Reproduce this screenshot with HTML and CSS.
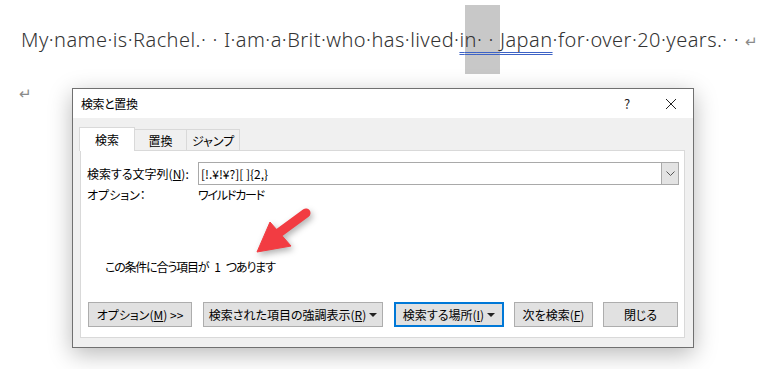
FILE: index.html
```html
<!DOCTYPE html>
<html lang="ja">
<head>
  <meta charset="UTF-8">
  <title>検索と置換</title>
  <link rel="stylesheet" href="styles.css">
</head>
<body>

  <div class="doc">
    <p class="line">My·name·is·Rachel.<span class="sp">··</span>I·am·a·Brit·who·has·lived·<span class="match">i<span class="sel">n<span class="sp">··</span></span>Japan</span>·for·over·20·years.<span class="sp">··</span><span class="mark">↵</span></p>
    <p class="mark para">↵</p>
  </div>

  <div class="dialog">
    <div class="titlebar">
      <span class="title">検索と置換</span>
      <span class="tb-btn">?</span>
      <span class="tb-btn">
        <svg width="12" height="12" viewBox="0 0 12 12"><path d="M1 1L11 11M11 1L1 11" stroke="#222" stroke-width="1" fill="none"/></svg>
      </span>
    </div>

    <div class="dlg-body">
      <div class="tabs">
        <div class="tab active">検索</div>
        <div class="tab t2">置換</div>
        <div class="tab t3">ジャンプ</div>
      </div>

      <div class="panel">
        <div class="row">
          <span class="label">検索する文字列(<u>N</u>):</span>
          <div class="combo">
            <span class="combo-text">[!.¥!¥?][ ]{2,}</span>
            <span class="combo-btn">
              <svg width="9" height="5" viewBox="0 0 9 5"><path d="M0.5 0.5L4.5 4.5L8.5 0.5" stroke="#555" stroke-width="1" fill="none"/></svg>
            </span>
          </div>
        </div>
        <div class="row opt">
          <span class="label">オプション：</span>
          <span class="kana">ワイルドカード</span>
        </div>

        <p class="result kana">この条件に合う項目が<span class="num">1</span>つあります</p>

        <div class="buttons">
          <button class="btn b1">オプション(<u>M</u>) &gt;&gt;</button>
          <button class="btn b2">検索された項目の強調表示(<u>R</u>) <span class="caret"></span></button>
          <button class="btn b3 focus">検索する場所(<u>I</u>) <span class="caret"></span></button>
          <button class="btn b4">次を検索(<u>F</u>)</button>
          <button class="btn b5">閉じる</button>
        </div>
      </div>
    </div>
  </div>

  <svg class="arrow" width="70" height="60" viewBox="250 205 70 60">
    <g fill="#f23c42" stroke="#f23c42">
      <line x1="306" y1="213" x2="276" y2="235" stroke-width="9" stroke-linecap="round"/>
      <polygon points="257,252 270,222 291,246" stroke-width="1" stroke-linejoin="round"/>
    </g>
  </svg>

</body>
</html>
```

FILE: styles.css
```css
body {
  margin: 0;
  background-color: white;
  font-family: "Noto Sans", "Noto Sans CJK JP", sans-serif;
  position: relative;
  height: 369px;
  overflow: hidden;
}

.doc {
  padding: 26px 0 0 21px;
}

.line {
  margin: 0;
  font-size: 20px;
  font-weight: 300;
  line-height: 27px;
  color: #333;
  letter-spacing: 0.45px;
  white-space: nowrap;
}

/* wide space marks (two spaces between sentences) */
.sp {
  letter-spacing: 6.6px;
}

.match {
  text-decoration-line: underline;
  text-decoration-style: double;
  text-decoration-color: #3d63c6;
  text-decoration-thickness: 1px;
  text-underline-offset: 5px;
}

.sel {
  background-color: #c8c8c8;
  padding: 21px 0 21px 0;
}

.mark {
  color: #8a8a8a;
  font-size: 15px;
  letter-spacing: 0;
}

.para {
  margin: 28px 0 0 -2px;
  line-height: 20px;
}

/* dialog */

.dialog {
  position: absolute;
  left: 72px;
  top: 88px;
  width: 622px;
  height: 260px;
  box-sizing: border-box;
  border: 1px solid #707070;
  background-color: #f0f0f0;
  box-shadow: 0 6px 22px rgba(0, 0, 0, 0.28);
  display: flex;
  flex-direction: column;
  font-family: "Noto Sans CJK JP", sans-serif;
  font-size: 12px;
  color: #000;
  font-feature-settings: "palt";
}

.titlebar {
  height: 29px;
  background-color: white;
  display: flex;
  align-items: center;
  padding-left: 8px;
}

.title {
  flex: 1;
  letter-spacing: -0.4px;
}

.tb-btn {
  width: 44px;
  height: 29px;
  display: flex;
  align-items: center;
  justify-content: center;
  font-size: 13px;
  color: #222;
}

.dlg-body {
  flex: 1;
  display: flex;
  flex-direction: column;
  padding: 9px 8px 9px 7px;
}

.tabs {
  display: flex;
  align-items: flex-end;
  height: 23px;
  margin-left: -1px;
}

.tab {
  height: 21px;
  box-sizing: border-box;
  border: 1px solid #d9d9d9;
  border-bottom: none;
  display: flex;
  align-items: center;
  justify-content: center;
  background-color: #f0f0f0;
  margin-left: -1px;
}

.tab.active {
  width: 56px;
  height: 24px;
  margin-left: 0;
  margin-bottom: -1px;
  background-color: white;
  position: relative;
  z-index: 1;
  padding-bottom: 1px;
}

.t2 { width: 53px; }
.t3 { width: 54px; }

.panel {
  flex: 1;
  background-color: white;
  border: 1px solid #d9d9d9;
  display: flex;
  flex-direction: column;
  padding: 11px 5px 10px 6px;
}

.row {
  display: flex;
  align-items: center;
  line-height: 17px;
}

.label {
  width: 111px;
}

.opt {
  margin-top: 1px;
}

.kana {
  letter-spacing: -1.2px;
}

.num {
  letter-spacing: 0;
  margin: 0 5px 0 6px;
}

.combo {
  flex: 1;
  height: 23px;
  box-sizing: border-box;
  border: 1px solid #a9a9a9;
  display: flex;
  align-items: center;
}

.combo-text {
  flex: 1;
  padding-left: 2px;
}

.combo-btn {
  width: 17px;
  height: 21px;
  box-sizing: border-box;
  background-color: #e3e3e3;
  border-left: 1px solid #a9a9a9;
  display: flex;
  align-items: center;
  justify-content: center;
}

.result {
  margin: 55px 0 0 18px;
  line-height: 17px;
}

.buttons {
  margin-top: auto;
  display: flex;
  gap: 10px;
  padding-left: 1px;
}

.btn {
  height: 25px;
  box-sizing: border-box;
  border: 1px solid #adadad;
  background-color: #e1e1e1;
  font-family: inherit;
  font-size: 12px;
  font-feature-settings: "palt";
  color: #000;
  padding: 0;
  display: flex;
  align-items: center;
  justify-content: center;
}

.btn.focus {
  border: 2px solid #0078d7;
}

.b1 { width: 104px; }
.b2 { width: 180px; margin-left: 1px; }
.b3 { width: 110px; margin-left: 1px; }
.b4 { width: 79px; }
.b5 { width: 75px; }

.caret {
  display: inline-block;
  width: 0;
  height: 0;
  border-left: 4px solid transparent;
  border-right: 4px solid transparent;
  border-top: 4px solid #222;
  margin-left: 3px;
}

.arrow {
  position: absolute;
  left: 250px;
  top: 205px;
  filter: drop-shadow(2px 3px 3px rgba(0, 0, 0, 0.3));
}
```
